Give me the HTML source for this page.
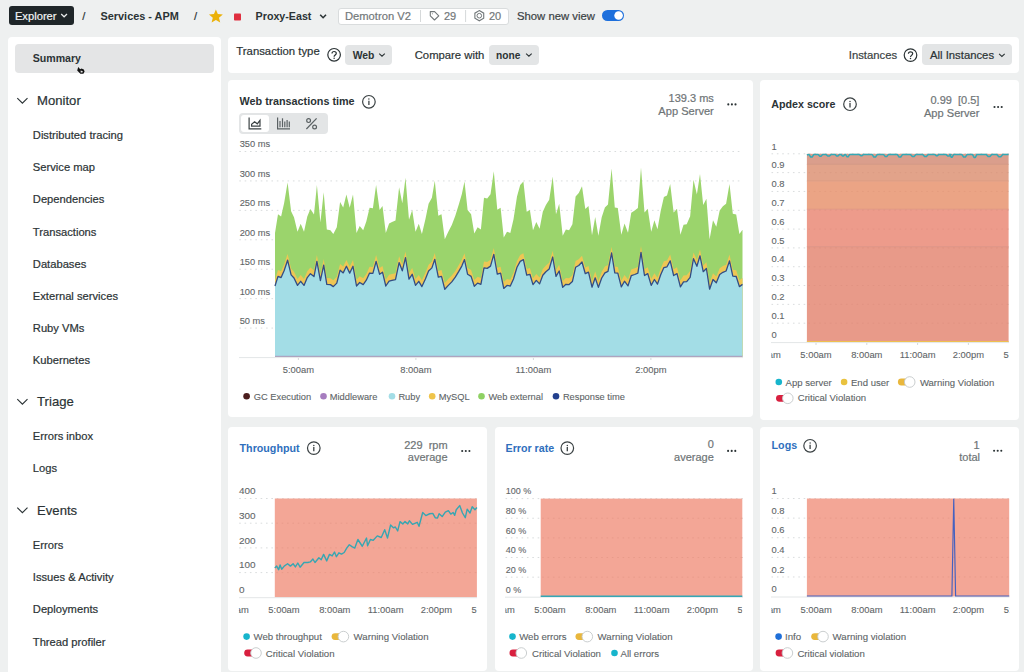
<!DOCTYPE html>
<html><head><meta charset="utf-8"><title>Proxy-East - Summary</title>
<style>
html,body{margin:0;padding:0;}
body{width:1024px;height:672px;overflow:hidden;position:relative;background:#eef0f0;font-family:"Liberation Sans", sans-serif;}
.t{position:absolute;white-space:nowrap;}
.b{position:absolute;}
svg{position:absolute;left:0;top:0;}
svg text{font-family:"Liberation Sans", sans-serif;}
</style></head><body>
<div class="b" style="left:8.5px;top:6.1px;width:65.2px;height:19.200000000000003px;background:#1f2629;border-radius:3px;"></div>
<div class="t" style="top:10.85px;font-size:11.2px;line-height:11.2px;color:#f2f3f3;-webkit-text-stroke:0.2px #f2f3f3;left:14.90px;">Explorer</div>
<div class="t" style="top:10.90px;font-size:11.2px;line-height:11.2px;color:#2b3335;-webkit-text-stroke:0.2px #2b3335;left:82.30px;">/</div>
<div class="t" style="top:11.02px;font-size:10.9px;line-height:10.9px;color:#2b3335;font-weight:700;left:100.50px;">Services - APM</div>
<div class="t" style="top:10.90px;font-size:11.2px;line-height:11.2px;color:#2b3335;-webkit-text-stroke:0.2px #2b3335;left:194.00px;">/</div>
<div class="t" style="top:11.00px;font-size:10.7px;line-height:10.7px;color:#2b3335;font-weight:700;left:255.60px;">Proxy-East</div>
<div class="b" style="left:337.5px;top:7.5px;width:171.7px;height:17.0px;background:#ffffff;border-radius:3px;border:1px solid #d9dcdd;box-sizing:border-box;"></div>
<div class="t" style="top:11.01px;font-size:11.2px;line-height:11.2px;color:#72787a;-webkit-text-stroke:0.2px #72787a;left:345.00px;">Demotron V2</div>
<div class="t" style="top:11.01px;font-size:11.0px;line-height:11.0px;color:#72787a;-webkit-text-stroke:0.2px #72787a;left:444.00px;">29</div>
<div class="t" style="top:11.01px;font-size:11.0px;line-height:11.0px;color:#72787a;-webkit-text-stroke:0.2px #72787a;left:489.00px;">20</div>
<div class="t" style="top:11.02px;font-size:11.3px;line-height:11.3px;color:#3a4244;-webkit-text-stroke:0.2px #3a4244;left:517.00px;">Show new view</div>
<div class="b" style="left:602.4px;top:10px;width:21.800000000000068px;height:11px;background:#1d6fdc;border-radius:6px;"></div>
<div class="b" style="left:8px;top:37px;width:213px;height:663px;background:#ffffff;border-radius:4px;"></div>
<div class="b" style="left:15px;top:44.3px;width:199px;height:28.299999999999997px;background:#e4e5e6;border-radius:4px;"></div>
<div class="t" style="top:53.41px;font-size:10.6px;line-height:10.6px;color:#2b3335;font-weight:700;left:32.70px;">Summary</div>
<div class="t" style="top:94.01px;font-size:13.1px;line-height:13.1px;color:#2b3335;-webkit-text-stroke:0.2px #2b3335;left:37.10px;">Monitor</div>
<div class="t" style="top:130.21px;font-size:11.2px;line-height:11.2px;color:#2b3335;-webkit-text-stroke:0.2px #2b3335;left:32.80px;">Distributed tracing</div>
<div class="t" style="top:162.31px;font-size:11.2px;line-height:11.2px;color:#2b3335;-webkit-text-stroke:0.2px #2b3335;left:32.80px;">Service map</div>
<div class="t" style="top:194.40px;font-size:11.2px;line-height:11.2px;color:#2b3335;-webkit-text-stroke:0.2px #2b3335;left:32.80px;">Dependencies</div>
<div class="t" style="top:226.51px;font-size:11.2px;line-height:11.2px;color:#2b3335;-webkit-text-stroke:0.2px #2b3335;left:32.80px;">Transactions</div>
<div class="t" style="top:258.60px;font-size:11.2px;line-height:11.2px;color:#2b3335;-webkit-text-stroke:0.2px #2b3335;left:32.80px;">Databases</div>
<div class="t" style="top:290.71px;font-size:11.2px;line-height:11.2px;color:#2b3335;-webkit-text-stroke:0.2px #2b3335;left:32.80px;">External services</div>
<div class="t" style="top:322.81px;font-size:11.2px;line-height:11.2px;color:#2b3335;-webkit-text-stroke:0.2px #2b3335;left:32.80px;">Ruby VMs</div>
<div class="t" style="top:354.90px;font-size:11.2px;line-height:11.2px;color:#2b3335;-webkit-text-stroke:0.2px #2b3335;left:32.80px;">Kubernetes</div>
<div class="t" style="top:395.01px;font-size:13.1px;line-height:13.1px;color:#2b3335;-webkit-text-stroke:0.2px #2b3335;left:37.10px;">Triage</div>
<div class="t" style="top:431.31px;font-size:11.2px;line-height:11.2px;color:#2b3335;-webkit-text-stroke:0.2px #2b3335;left:32.80px;">Errors inbox</div>
<div class="t" style="top:463.41px;font-size:11.2px;line-height:11.2px;color:#2b3335;-webkit-text-stroke:0.2px #2b3335;left:32.80px;">Logs</div>
<div class="t" style="top:503.51px;font-size:13.1px;line-height:13.1px;color:#2b3335;-webkit-text-stroke:0.2px #2b3335;left:37.10px;">Events</div>
<div class="t" style="top:540.21px;font-size:11.2px;line-height:11.2px;color:#2b3335;-webkit-text-stroke:0.2px #2b3335;left:32.80px;">Errors</div>
<div class="t" style="top:572.31px;font-size:11.2px;line-height:11.2px;color:#2b3335;-webkit-text-stroke:0.2px #2b3335;left:32.80px;">Issues &amp; Activity</div>
<div class="t" style="top:604.41px;font-size:11.2px;line-height:11.2px;color:#2b3335;-webkit-text-stroke:0.2px #2b3335;left:32.80px;">Deployments</div>
<div class="t" style="top:636.51px;font-size:11.2px;line-height:11.2px;color:#2b3335;-webkit-text-stroke:0.2px #2b3335;left:32.80px;">Thread profiler</div>
<div class="b" style="left:228.3px;top:37.1px;width:790.7px;height:35.699999999999996px;background:#ffffff;border-radius:4px;"></div>
<div class="t" style="top:45.51px;font-size:11.35px;line-height:11.35px;color:#2b3335;-webkit-text-stroke:0.2px #2b3335;left:236.30px;">Transaction type</div>
<div class="b" style="left:345.3px;top:44.6px;width:47.19999999999999px;height:20.800000000000004px;background:#e3e5e6;border-radius:4px;"></div>
<div class="t" style="top:50.70px;font-size:10.4px;line-height:10.4px;color:#2b3335;font-weight:700;left:352.70px;">Web</div>
<div class="t" style="top:50.10px;font-size:11.3px;line-height:11.3px;color:#2b3335;-webkit-text-stroke:0.2px #2b3335;left:414.70px;">Compare with</div>
<div class="b" style="left:488.9px;top:44.6px;width:49.700000000000045px;height:20.800000000000004px;background:#e3e5e6;border-radius:4px;"></div>
<div class="t" style="top:51.00px;font-size:10.2px;line-height:10.2px;color:#2b3335;font-weight:700;left:496.00px;">none</div>
<div class="t" style="top:50.22px;font-size:11.3px;line-height:11.3px;color:#3a4244;-webkit-text-stroke:0.2px #3a4244;left:848.80px;">Instances</div>
<div class="b" style="left:922.2px;top:44.4px;width:89.69999999999993px;height:21.1px;background:#e3e5e6;border-radius:4px;"></div>
<div class="t" style="top:50.22px;font-size:11.3px;line-height:11.3px;color:#2b3335;-webkit-text-stroke:0.2px #2b3335;left:930.00px;">All Instances</div>
<div class="b" style="left:228.3px;top:80.2px;width:524.7px;height:337.3px;background:#ffffff;border-radius:4px;"></div>
<div class="b" style="left:760.2px;top:80.2px;width:258.79999999999995px;height:339.8px;background:#ffffff;border-radius:4px;"></div>
<div class="b" style="left:228.4px;top:427.3px;width:258.6px;height:243.99999999999994px;background:#ffffff;border-radius:4px;"></div>
<div class="b" style="left:494.9px;top:427.3px;width:258.1px;height:243.99999999999994px;background:#ffffff;border-radius:4px;"></div>
<div class="b" style="left:760.2px;top:427.3px;width:258.79999999999995px;height:243.99999999999994px;background:#ffffff;border-radius:4px;"></div>
<div class="t" style="top:96.31px;font-size:10.8px;line-height:10.8px;color:#2b3335;font-weight:700;left:239.60px;">Web transactions time</div>
<div class="t" style="top:93.01px;font-size:11.0px;line-height:11.0px;color:#6e7476;-webkit-text-stroke:0.2px #6e7476;right:310.20px;text-align:right;">139.3 ms</div>
<div class="t" style="top:105.90px;font-size:11.1px;line-height:11.1px;color:#6e7476;-webkit-text-stroke:0.2px #6e7476;right:310.20px;text-align:right;">App Server</div>
<div class="b" style="left:239.1px;top:113.3px;width:88.70000000000002px;height:20.799999999999997px;background:#e3e5e6;border-radius:4px;"></div>
<div class="b" style="left:240.7px;top:114.9px;width:28.400000000000034px;height:17.400000000000006px;background:#ffffff;border-radius:3px;"></div>
<div class="t" style="top:140.40px;font-size:9.3px;line-height:9.3px;color:#5f6668;-webkit-text-stroke:0.1px #5f6668;left:239.70px;">350 ms</div>
<div class="t" style="top:169.83px;font-size:9.3px;line-height:9.3px;color:#5f6668;-webkit-text-stroke:0.1px #5f6668;left:239.70px;">300 ms</div>
<div class="t" style="top:199.26px;font-size:9.3px;line-height:9.3px;color:#5f6668;-webkit-text-stroke:0.1px #5f6668;left:239.70px;">250 ms</div>
<div class="t" style="top:228.71px;font-size:9.3px;line-height:9.3px;color:#5f6668;-webkit-text-stroke:0.1px #5f6668;left:239.70px;">200 ms</div>
<div class="t" style="top:258.12px;font-size:9.3px;line-height:9.3px;color:#5f6668;-webkit-text-stroke:0.1px #5f6668;left:239.70px;">150 ms</div>
<div class="t" style="top:287.57px;font-size:9.3px;line-height:9.3px;color:#5f6668;-webkit-text-stroke:0.1px #5f6668;left:239.70px;">100 ms</div>
<div class="t" style="top:316.99px;font-size:9.3px;line-height:9.3px;color:#5f6668;-webkit-text-stroke:0.1px #5f6668;left:239.70px;">50 ms</div>
<div class="t" style="top:365.01px;font-size:9.4px;line-height:9.4px;color:#5f6668;-webkit-text-stroke:0.1px #5f6668;left:198.40px;width:200px;text-align:center;">5:00am</div>
<div class="t" style="top:365.01px;font-size:9.4px;line-height:9.4px;color:#5f6668;-webkit-text-stroke:0.1px #5f6668;left:315.90px;width:200px;text-align:center;">8:00am</div>
<div class="t" style="top:365.01px;font-size:9.4px;line-height:9.4px;color:#5f6668;-webkit-text-stroke:0.1px #5f6668;left:433.40px;width:200px;text-align:center;">11:00am</div>
<div class="t" style="top:365.01px;font-size:9.4px;line-height:9.4px;color:#5f6668;-webkit-text-stroke:0.1px #5f6668;left:550.90px;width:200px;text-align:center;">2:00pm</div>
<div class="t" style="top:392.80px;font-size:9.3px;line-height:9.3px;color:#5d6466;-webkit-text-stroke:0.1px #5d6466;left:253.75px;">GC Execution</div>
<div class="t" style="top:392.80px;font-size:9.3px;line-height:9.3px;color:#5d6466;-webkit-text-stroke:0.1px #5d6466;left:329.80px;">Middleware</div>
<div class="t" style="top:392.80px;font-size:9.3px;line-height:9.3px;color:#5d6466;-webkit-text-stroke:0.1px #5d6466;left:398.40px;">Ruby</div>
<div class="t" style="top:392.80px;font-size:9.3px;line-height:9.3px;color:#5d6466;-webkit-text-stroke:0.1px #5d6466;left:438.70px;">MySQL</div>
<div class="t" style="top:392.80px;font-size:9.3px;line-height:9.3px;color:#5d6466;-webkit-text-stroke:0.1px #5d6466;left:488.40px;">Web external</div>
<div class="t" style="top:392.80px;font-size:9.3px;line-height:9.3px;color:#5d6466;-webkit-text-stroke:0.1px #5d6466;left:562.90px;">Response time</div>
<div class="t" style="top:99.00px;font-size:10.7px;line-height:10.7px;color:#2b3335;font-weight:700;left:771.30px;">Apdex score</div>
<div class="t" style="top:95.40px;font-size:11.0px;line-height:11.0px;color:#6e7476;-webkit-text-stroke:0.2px #6e7476;right:44.60px;text-align:right;">0.99&nbsp;&nbsp;[0.5]</div>
<div class="t" style="top:108.02px;font-size:11.1px;line-height:11.1px;color:#6e7476;-webkit-text-stroke:0.2px #6e7476;right:44.60px;text-align:right;">App Server</div>
<div class="t" style="top:141.51px;font-size:9.4px;line-height:9.4px;color:#5f6668;-webkit-text-stroke:0.1px #5f6668;left:771.50px;">1</div>
<div class="t" style="top:160.32px;font-size:9.4px;line-height:9.4px;color:#5f6668;-webkit-text-stroke:0.1px #5f6668;left:771.50px;">0.9</div>
<div class="t" style="top:179.15px;font-size:9.4px;line-height:9.4px;color:#5f6668;-webkit-text-stroke:0.1px #5f6668;left:771.50px;">0.8</div>
<div class="t" style="top:197.96px;font-size:9.4px;line-height:9.4px;color:#5f6668;-webkit-text-stroke:0.1px #5f6668;left:771.50px;">0.7</div>
<div class="t" style="top:216.79px;font-size:9.4px;line-height:9.4px;color:#5f6668;-webkit-text-stroke:0.1px #5f6668;left:771.50px;">0.6</div>
<div class="t" style="top:235.60px;font-size:9.4px;line-height:9.4px;color:#5f6668;-webkit-text-stroke:0.1px #5f6668;left:771.50px;">0.5</div>
<div class="t" style="top:254.43px;font-size:9.4px;line-height:9.4px;color:#5f6668;-webkit-text-stroke:0.1px #5f6668;left:771.50px;">0.4</div>
<div class="t" style="top:273.24px;font-size:9.4px;line-height:9.4px;color:#5f6668;-webkit-text-stroke:0.1px #5f6668;left:771.50px;">0.3</div>
<div class="t" style="top:292.07px;font-size:9.4px;line-height:9.4px;color:#5f6668;-webkit-text-stroke:0.1px #5f6668;left:771.50px;">0.2</div>
<div class="t" style="top:310.89px;font-size:9.4px;line-height:9.4px;color:#5f6668;-webkit-text-stroke:0.1px #5f6668;left:771.50px;">0.1</div>
<div class="t" style="top:329.71px;font-size:9.4px;line-height:9.4px;color:#5f6668;-webkit-text-stroke:0.1px #5f6668;left:771.50px;">0</div>
<div class="t" style="top:377.61px;font-size:9.55px;line-height:9.55px;color:#5d6466;-webkit-text-stroke:0.1px #5d6466;left:785.60px;">App server</div>
<div class="t" style="top:377.61px;font-size:9.55px;line-height:9.55px;color:#5d6466;-webkit-text-stroke:0.1px #5d6466;left:851.00px;">End user</div>
<div class="t" style="top:377.61px;font-size:9.55px;line-height:9.55px;color:#5d6466;-webkit-text-stroke:0.1px #5d6466;left:919.90px;">Warning Violation</div>
<div class="t" style="top:393.42px;font-size:9.55px;line-height:9.55px;color:#5d6466;-webkit-text-stroke:0.1px #5d6466;left:797.80px;">Critical Violation</div>
<div class="t" style="top:442.61px;font-size:10.7px;line-height:10.7px;color:#2f6fbd;font-weight:700;left:239.60px;">Throughput</div>
<div class="t" style="top:439.60px;font-size:11.0px;line-height:11.0px;color:#6e7476;-webkit-text-stroke:0.2px #6e7476;right:576.40px;text-align:right;">229&nbsp;&nbsp;rpm</div>
<div class="t" style="top:452.40px;font-size:11.0px;line-height:11.0px;color:#6e7476;-webkit-text-stroke:0.2px #6e7476;right:576.40px;text-align:right;">average</div>
<div class="t" style="top:486.12px;font-size:9.95px;line-height:9.95px;color:#5f6668;-webkit-text-stroke:0.1px #5f6668;left:239.00px;">400</div>
<div class="t" style="top:510.81px;font-size:9.95px;line-height:9.95px;color:#5f6668;-webkit-text-stroke:0.1px #5f6668;left:239.00px;">300</div>
<div class="t" style="top:535.51px;font-size:9.95px;line-height:9.95px;color:#5f6668;-webkit-text-stroke:0.1px #5f6668;left:239.00px;">200</div>
<div class="t" style="top:560.21px;font-size:9.95px;line-height:9.95px;color:#5f6668;-webkit-text-stroke:0.1px #5f6668;left:239.00px;">100</div>
<div class="t" style="top:584.90px;font-size:9.95px;line-height:9.95px;color:#5f6668;-webkit-text-stroke:0.1px #5f6668;left:239.00px;">0</div>
<div class="t" style="top:632.41px;font-size:9.65px;line-height:9.65px;color:#5d6466;-webkit-text-stroke:0.1px #5d6466;left:253.50px;">Web throughput</div>
<div class="t" style="top:632.41px;font-size:9.65px;line-height:9.65px;color:#5d6466;-webkit-text-stroke:0.1px #5d6466;left:353.60px;">Warning Violation</div>
<div class="t" style="top:648.91px;font-size:9.65px;line-height:9.65px;color:#5d6466;-webkit-text-stroke:0.1px #5d6466;left:265.70px;">Critical Violation</div>
<div class="t" style="top:442.80px;font-size:10.7px;line-height:10.7px;color:#2f6fbd;font-weight:700;left:505.50px;">Error rate</div>
<div class="t" style="top:439.40px;font-size:11.0px;line-height:11.0px;color:#6e7476;-webkit-text-stroke:0.2px #6e7476;right:310.20px;text-align:right;">0</div>
<div class="t" style="top:452.01px;font-size:11.0px;line-height:11.0px;color:#6e7476;-webkit-text-stroke:0.2px #6e7476;right:310.20px;text-align:right;">average</div>
<div class="t" style="top:487.31px;font-size:9.0px;line-height:9.0px;color:#5f6668;-webkit-text-stroke:0.1px #5f6668;left:505.70px;">100 %</div>
<div class="t" style="top:506.95px;font-size:9.0px;line-height:9.0px;color:#5f6668;-webkit-text-stroke:0.1px #5f6668;left:505.70px;">80 %</div>
<div class="t" style="top:526.59px;font-size:9.0px;line-height:9.0px;color:#5f6668;-webkit-text-stroke:0.1px #5f6668;left:505.70px;">60 %</div>
<div class="t" style="top:546.23px;font-size:9.0px;line-height:9.0px;color:#5f6668;-webkit-text-stroke:0.1px #5f6668;left:505.70px;">40 %</div>
<div class="t" style="top:565.87px;font-size:9.0px;line-height:9.0px;color:#5f6668;-webkit-text-stroke:0.1px #5f6668;left:505.70px;">20 %</div>
<div class="t" style="top:585.51px;font-size:9.0px;line-height:9.0px;color:#5f6668;-webkit-text-stroke:0.1px #5f6668;left:505.70px;">0 %</div>
<div class="t" style="top:632.41px;font-size:9.65px;line-height:9.65px;color:#5d6466;-webkit-text-stroke:0.1px #5d6466;left:519.20px;">Web errors</div>
<div class="t" style="top:632.41px;font-size:9.65px;line-height:9.65px;color:#5d6466;-webkit-text-stroke:0.1px #5d6466;left:597.60px;">Warning Violation</div>
<div class="t" style="top:648.91px;font-size:9.65px;line-height:9.65px;color:#5d6466;-webkit-text-stroke:0.1px #5d6466;left:532.00px;">Critical Violation</div>
<div class="t" style="top:648.91px;font-size:9.65px;line-height:9.65px;color:#5d6466;-webkit-text-stroke:0.1px #5d6466;left:620.50px;">All errors</div>
<div class="t" style="top:440.30px;font-size:10.7px;line-height:10.7px;color:#2f6fbd;font-weight:700;left:771.60px;">Logs</div>
<div class="t" style="top:439.60px;font-size:11.0px;line-height:11.0px;color:#6e7476;-webkit-text-stroke:0.2px #6e7476;right:44.50px;text-align:right;">1</div>
<div class="t" style="top:452.01px;font-size:11.0px;line-height:11.0px;color:#6e7476;-webkit-text-stroke:0.2px #6e7476;right:44.00px;text-align:right;">total</div>
<div class="t" style="top:486.21px;font-size:9.4px;line-height:9.4px;color:#5f6668;-webkit-text-stroke:0.1px #5f6668;left:771.50px;">1</div>
<div class="t" style="top:505.82px;font-size:9.4px;line-height:9.4px;color:#5f6668;-webkit-text-stroke:0.1px #5f6668;left:771.50px;">0.8</div>
<div class="t" style="top:525.45px;font-size:9.4px;line-height:9.4px;color:#5f6668;-webkit-text-stroke:0.1px #5f6668;left:771.50px;">0.6</div>
<div class="t" style="top:545.07px;font-size:9.4px;line-height:9.4px;color:#5f6668;-webkit-text-stroke:0.1px #5f6668;left:771.50px;">0.4</div>
<div class="t" style="top:564.68px;font-size:9.4px;line-height:9.4px;color:#5f6668;-webkit-text-stroke:0.1px #5f6668;left:771.50px;">0.2</div>
<div class="t" style="top:584.31px;font-size:9.4px;line-height:9.4px;color:#5f6668;-webkit-text-stroke:0.1px #5f6668;left:771.50px;">0</div>
<div class="t" style="top:632.41px;font-size:9.65px;line-height:9.65px;color:#5d6466;-webkit-text-stroke:0.1px #5d6466;left:785.00px;">Info</div>
<div class="t" style="top:632.41px;font-size:9.65px;line-height:9.65px;color:#5d6466;-webkit-text-stroke:0.1px #5d6466;left:832.60px;">Warning violation</div>
<div class="t" style="top:648.91px;font-size:9.65px;line-height:9.65px;color:#5d6466;-webkit-text-stroke:0.1px #5d6466;left:797.40px;">Critical violation</div>
<svg width="1024" height="672" viewBox="0 0 1024 672">
<line x1="239.3" y1="151.50" x2="743" y2="151.50" stroke="#d9dcdd" stroke-width="1.0" stroke-dasharray="1.6 3.76"/>
<line x1="239.3" y1="180.93" x2="743" y2="180.93" stroke="#d9dcdd" stroke-width="1.0" stroke-dasharray="1.6 3.76"/>
<line x1="239.3" y1="210.36" x2="743" y2="210.36" stroke="#d9dcdd" stroke-width="1.0" stroke-dasharray="1.6 3.76"/>
<line x1="239.3" y1="239.79" x2="743" y2="239.79" stroke="#d9dcdd" stroke-width="1.0" stroke-dasharray="1.6 3.76"/>
<line x1="239.3" y1="269.22" x2="743" y2="269.22" stroke="#d9dcdd" stroke-width="1.0" stroke-dasharray="1.6 3.76"/>
<line x1="239.3" y1="298.65" x2="743" y2="298.65" stroke="#d9dcdd" stroke-width="1.0" stroke-dasharray="1.6 3.76"/>
<line x1="239.3" y1="328.08" x2="743" y2="328.08" stroke="#d9dcdd" stroke-width="1.0" stroke-dasharray="1.6 3.76"/>
<line x1="771.5" y1="153.80" x2="1009" y2="153.80" stroke="#d9dcdd" stroke-width="1.0" stroke-dasharray="1.6 3.76"/>
<line x1="771.5" y1="172.62" x2="1009" y2="172.62" stroke="#d9dcdd" stroke-width="1.0" stroke-dasharray="1.6 3.76"/>
<line x1="771.5" y1="191.44" x2="1009" y2="191.44" stroke="#d9dcdd" stroke-width="1.0" stroke-dasharray="1.6 3.76"/>
<line x1="771.5" y1="210.26" x2="1009" y2="210.26" stroke="#d9dcdd" stroke-width="1.0" stroke-dasharray="1.6 3.76"/>
<line x1="771.5" y1="229.08" x2="1009" y2="229.08" stroke="#d9dcdd" stroke-width="1.0" stroke-dasharray="1.6 3.76"/>
<line x1="771.5" y1="247.90" x2="1009" y2="247.90" stroke="#d9dcdd" stroke-width="1.0" stroke-dasharray="1.6 3.76"/>
<line x1="771.5" y1="266.72" x2="1009" y2="266.72" stroke="#d9dcdd" stroke-width="1.0" stroke-dasharray="1.6 3.76"/>
<line x1="771.5" y1="285.54" x2="1009" y2="285.54" stroke="#d9dcdd" stroke-width="1.0" stroke-dasharray="1.6 3.76"/>
<line x1="771.5" y1="304.36" x2="1009" y2="304.36" stroke="#d9dcdd" stroke-width="1.0" stroke-dasharray="1.6 3.76"/>
<line x1="771.5" y1="323.18" x2="1009" y2="323.18" stroke="#d9dcdd" stroke-width="1.0" stroke-dasharray="1.6 3.76"/>
<line x1="239.2" y1="498.50" x2="477" y2="498.50" stroke="#d9dcdd" stroke-width="1.0" stroke-dasharray="1.6 3.76"/>
<line x1="239.2" y1="523.20" x2="477" y2="523.20" stroke="#d9dcdd" stroke-width="1.0" stroke-dasharray="1.6 3.76"/>
<line x1="239.2" y1="547.90" x2="477" y2="547.90" stroke="#d9dcdd" stroke-width="1.0" stroke-dasharray="1.6 3.76"/>
<line x1="239.2" y1="572.60" x2="477" y2="572.60" stroke="#d9dcdd" stroke-width="1.0" stroke-dasharray="1.6 3.76"/>
<line x1="505.5" y1="498.60" x2="743" y2="498.60" stroke="#d9dcdd" stroke-width="1.0" stroke-dasharray="1.6 3.76"/>
<line x1="505.5" y1="518.24" x2="743" y2="518.24" stroke="#d9dcdd" stroke-width="1.0" stroke-dasharray="1.6 3.76"/>
<line x1="505.5" y1="537.88" x2="743" y2="537.88" stroke="#d9dcdd" stroke-width="1.0" stroke-dasharray="1.6 3.76"/>
<line x1="505.5" y1="557.52" x2="743" y2="557.52" stroke="#d9dcdd" stroke-width="1.0" stroke-dasharray="1.6 3.76"/>
<line x1="505.5" y1="577.16" x2="743" y2="577.16" stroke="#d9dcdd" stroke-width="1.0" stroke-dasharray="1.6 3.76"/>
<line x1="771.5" y1="498.50" x2="1009.5" y2="498.50" stroke="#d9dcdd" stroke-width="1.0" stroke-dasharray="1.6 3.76"/>
<line x1="771.5" y1="518.12" x2="1009.5" y2="518.12" stroke="#d9dcdd" stroke-width="1.0" stroke-dasharray="1.6 3.76"/>
<line x1="771.5" y1="537.74" x2="1009.5" y2="537.74" stroke="#d9dcdd" stroke-width="1.0" stroke-dasharray="1.6 3.76"/>
<line x1="771.5" y1="557.36" x2="1009.5" y2="557.36" stroke="#d9dcdd" stroke-width="1.0" stroke-dasharray="1.6 3.76"/>
<line x1="771.5" y1="576.98" x2="1009.5" y2="576.98" stroke="#d9dcdd" stroke-width="1.0" stroke-dasharray="1.6 3.76"/>
<polyline points="61.2,14 64.1,16.8 67,14" fill="none" stroke="#eceeee" stroke-width="1.2"/>
<polygon points="215.90,9.40 217.81,14.07 222.84,14.44 218.99,17.70 220.19,22.61 215.90,19.95 211.61,22.61 212.81,17.70 208.96,14.44 213.99,14.07" fill="#ebb108"/>
<rect x="234" y="13.5" width="7" height="7" rx="0.8" fill="#df2f3f"/>
<polyline points="320.2,14.8 323.1,17.7 326,14.8" fill="none" stroke="#2b3335" stroke-width="1.6"/>
<line x1="420.5" y1="10" x2="420.5" y2="22" stroke="#d6d9da" stroke-width="1"/>
<line x1="465.6" y1="10" x2="465.6" y2="22" stroke="#d6d9da" stroke-width="1"/>
<path d="M430.3,11.6 L434.6,11.6 L438.8,15.8 L434.5,20 L430.3,15.8 Z" fill="none" stroke="#72787a" stroke-width="1.1" stroke-linejoin="round"/>
<circle cx="432.4" cy="13.7" r="0.5" fill="#72787a"/>
<polygon points="479.30,10.60 483.72,13.15 483.72,18.25 479.30,20.80 474.88,18.25 474.88,13.15" fill="none" stroke="#72787a" stroke-width="1.1"/>
<circle cx="479.3" cy="15.7" r="2.3" fill="none" stroke="#72787a" stroke-width="1"/>
<circle cx="618.6" cy="15.5" r="4.3" fill="#ffffff"/>
<path d="M78.2,67 L80.2,69.2 L81.5,68.6 L83.8,69.6 L84.6,71.6 L83.4,73.8 L80.4,73.8 L77.2,70.6 Z" fill="#111"/>
<path d="M80.6,70.6 L82.8,71.2 L82.4,72.6 L80.6,72.6 Z" fill="#e8e8e8"/>
<polyline points="17.3,98.2 22.4,103.2 27.5,98.2" fill="none" stroke="#2b3335" stroke-width="1.15"/>
<polyline points="17.3,399.2 22.4,404.2 27.5,399.2" fill="none" stroke="#2b3335" stroke-width="1.15"/>
<polyline points="17.3,507.7 22.4,512.6999999999999 27.5,507.7" fill="none" stroke="#2b3335" stroke-width="1.15"/>
<circle cx="334.1" cy="54.8" r="6.3" fill="none" stroke="#2b3335" stroke-width="1.2"/>
<path d="M332.0,53.4 C332.0,50.9 336.3,50.9 336.3,53.3 C336.3,55.0 334.1,55.099999999999994 334.1,56.699999999999996" fill="none" stroke="#2b3335" stroke-width="1.2"/>
<circle cx="334.1" cy="58.3" r="0.75" fill="#2b3335"/>
<polyline points="379.2,53.6 382.0,56.2 384.8,53.6" fill="none" stroke="#2b3335" stroke-width="1.1"/>
<polyline points="526.1,53.6 528.9,56.2 531.7,53.6" fill="none" stroke="#2b3335" stroke-width="1.1"/>
<circle cx="910.5" cy="55.1" r="6.3" fill="none" stroke="#2b3335" stroke-width="1.2"/>
<path d="M908.4,53.7 C908.4,51.2 912.7,51.2 912.7,53.6 C912.7,55.300000000000004 910.5,55.4 910.5,57.0" fill="none" stroke="#2b3335" stroke-width="1.2"/>
<circle cx="910.5" cy="58.6" r="0.75" fill="#2b3335"/>
<polyline points="999.1,53.8 1001.9,56.4 1004.7,53.8" fill="none" stroke="#2b3335" stroke-width="1.1"/>
<circle cx="368.9" cy="101.8" r="6.3" fill="none" stroke="#3b4244" stroke-width="1.2"/>
<line x1="368.9" y1="100.7" x2="368.9" y2="105.0" stroke="#3b4244" stroke-width="1.3"/>
<circle cx="368.9" cy="99.1" r="0.75" fill="#3b4244"/>
<circle cx="728.30" cy="104.4" r="1.05" fill="#2b3335"/>
<circle cx="731.90" cy="104.4" r="1.05" fill="#2b3335"/>
<circle cx="735.50" cy="104.4" r="1.05" fill="#2b3335"/>
<g fill="none" stroke="#3b4244" stroke-width="1.2"><polyline points="249.1,117.6 249.1,128.8 261.3,128.8"/><path d="M251.6,126.2 L251.6,124.3 L254.6,121.8 L257.3,123.8 L260,120.3 L260,126.2 Z"/></g>
<g fill="none" stroke="#5a6163" stroke-width="1.2"><polyline points="277.6,117.6 277.6,128.8 290,128.8"/><line x1="280" y1="121" x2="280" y2="127.2"/><line x1="282.5" y1="118.3" x2="282.5" y2="127.2"/><line x1="284.8" y1="121.6" x2="284.8" y2="127.2"/><line x1="287.1" y1="120" x2="287.1" y2="127.2"/><line x1="289.3" y1="121.6" x2="289.3" y2="127.2"/></g>
<g fill="none" stroke="#5a6163" stroke-width="1.2"><line x1="306.4" y1="129" x2="316.6" y2="118.3"/><circle cx="308.6" cy="120.6" r="1.9"/><circle cx="314.6" cy="127" r="1.9"/></g>
<polygon points="275.0,356.6 275.00,232.93 278.00,214.21 281.10,216.55 284.10,203.29 287.60,182.62 291.10,211.28 294.00,217.33 297.50,231.76 300.70,223.77 304.00,231.76 307.30,216.55 310.40,208.94 314.00,214.60 316.90,184.96 320.40,222.59 323.70,192.37 326.80,229.62 330.40,230.20 333.30,234.10 336.80,227.28 340.10,202.12 343.20,207.38 346.40,194.52 349.70,207.78 353.00,194.52 356.50,232.93 359.70,226.10 363.20,230.20 366.30,221.62 369.60,207.78 372.90,208.36 376.10,184.96 379.60,210.12 382.50,206.02 385.80,232.93 389.10,223.38 392.00,222.01 395.50,220.45 399.10,187.30 402.30,203.29 405.50,177.74 409.00,219.67 412.20,210.12 415.50,231.76 418.80,223.77 421.90,234.10 425.40,219.28 428.60,203.68 431.90,197.63 434.80,180.87 438.30,215.77 441.50,214.21 444.80,239.37 448.30,231.76 451.80,224.93 455.30,215.77 458.80,204.46 461.80,194.13 464.50,181.45 467.60,210.12 471.10,214.21 474.30,233.52 477.60,227.28 480.90,229.62 484.00,197.63 487.20,198.61 490.50,194.13 493.80,171.31 497.30,209.73 500.60,207.78 503.75,237.61 507.00,231.76 510.30,232.93 513.50,219.28 517.00,196.47 520.20,184.96 523.40,181.45 526.70,211.87 529.90,210.12 533.00,230.20 536.30,222.01 539.60,228.83 542.80,211.87 545.90,205.04 549.20,199.78 552.70,176.38 556.00,214.21 559.20,203.68 562.70,235.66 565.90,229.62 569.10,230.20 572.40,224.35 575.60,196.47 578.75,192.95 582.00,186.13 585.30,208.94 588.50,206.02 592.00,235.27 595.20,216.94 598.40,235.66 601.70,217.33 604.90,207.38 608.00,204.46 611.60,168.58 614.80,207.38 617.80,207.97 621.30,234.68 624.50,223.57 628.00,232.73 631.25,212.84 634.70,210.50 637.90,207.97 641.00,167.41 644.50,212.45 647.75,208.75 651.20,231.76 654.40,220.25 657.50,229.23 660.70,211.09 663.90,197.05 667.00,195.49 670.20,183.98 673.65,212.45 677.00,208.75 680.40,234.68 683.55,224.74 686.70,224.35 690.15,216.16 693.50,179.69 696.90,194.52 700.00,174.04 703.20,205.04 706.40,198.80 709.60,239.17 713.00,220.25 716.30,226.69 719.70,210.50 722.90,206.22 726.10,203.68 729.50,183.98 732.80,213.63 736.20,214.40 739.40,234.10 742.50,229.81 742.5,356.6" fill="#9bd46c"/>
<polygon points="275.0,356.6 275.00,279.70 278.00,270.10 281.10,271.30 284.10,264.50 287.60,253.90 291.10,268.60 294.00,271.70 297.50,279.10 300.70,275.00 304.00,279.10 307.30,271.30 310.40,267.40 314.00,270.30 316.90,255.10 320.40,274.40 323.70,258.90 326.80,278.00 330.40,278.30 333.30,280.30 336.80,276.80 340.10,263.90 343.20,266.60 346.40,260.00 349.70,266.80 353.00,260.00 356.50,279.70 359.70,276.20 363.20,278.30 366.30,273.90 369.60,266.80 372.90,267.10 376.10,255.10 379.60,268.00 382.50,265.90 385.80,279.70 389.10,274.80 392.00,274.10 395.50,273.30 399.10,256.30 402.30,264.50 405.50,251.40 409.00,272.90 412.20,268.00 415.50,279.10 418.80,275.00 421.90,280.30 425.40,272.70 428.60,264.70 431.90,261.60 434.80,253.00 438.30,270.90 441.50,270.10 444.80,283.00 448.30,279.10 451.80,275.60 455.30,270.90 458.80,265.10 461.80,259.80 464.50,253.30 467.60,268.00 471.10,270.10 474.30,280.00 477.60,276.80 480.90,278.00 484.00,261.60 487.20,262.10 490.50,259.80 493.80,248.10 497.30,267.80 500.60,266.80 503.75,282.10 507.00,279.10 510.30,279.70 513.50,272.70 517.00,261.00 520.20,255.10 523.40,253.30 526.70,268.90 529.90,268.00 533.00,278.30 536.30,274.10 539.60,277.60 542.80,268.90 545.90,265.40 549.20,262.70 552.70,250.70 556.00,270.10 559.20,264.70 562.70,281.10 565.90,278.00 569.10,278.30 572.40,275.30 575.60,261.00 578.75,259.20 582.00,255.70 585.30,267.40 588.50,265.90 592.00,280.90 595.20,271.50 598.40,281.10 601.70,271.70 604.90,266.60 608.00,265.10 611.60,246.70 614.80,266.60 617.80,266.90 621.30,280.60 624.50,274.90 628.00,279.60 631.25,269.40 634.70,268.20 637.90,266.90 641.00,246.10 644.50,269.20 647.75,267.30 651.20,279.10 654.40,273.20 657.50,277.80 660.70,268.50 663.90,261.30 667.00,260.50 670.20,254.60 673.65,269.20 677.00,267.30 680.40,280.60 683.55,275.50 686.70,275.30 690.15,271.10 693.50,252.40 696.90,260.00 700.00,249.50 703.20,265.40 706.40,262.20 709.60,282.90 713.00,273.20 716.30,276.50 719.70,268.20 722.90,266.00 726.10,264.70 729.50,254.60 732.80,269.80 736.20,270.20 739.40,280.30 742.50,278.10 742.5,356.6" fill="#eec654"/>
<polygon points="275.0,356.6 275.00,286.00 278.00,276.40 281.10,277.60 284.10,270.80 287.60,260.20 291.10,274.90 294.00,278.00 297.50,285.40 300.70,281.30 304.00,285.40 307.30,277.60 310.40,273.70 314.00,276.60 316.90,261.40 320.40,280.70 323.70,265.20 326.80,284.30 330.40,284.60 333.30,286.60 336.80,283.10 340.10,270.20 343.20,272.90 346.40,266.30 349.70,273.10 353.00,266.30 356.50,286.00 359.70,282.50 363.20,284.60 366.30,280.20 369.60,273.10 372.90,273.40 376.10,261.40 379.60,274.30 382.50,272.20 385.80,286.00 389.10,281.10 392.00,280.40 395.50,279.60 399.10,262.60 402.30,270.80 405.50,257.70 409.00,279.20 412.20,274.30 415.50,285.40 418.80,281.30 421.90,286.60 425.40,279.00 428.60,271.00 431.90,267.90 434.80,259.30 438.30,277.20 441.50,276.40 444.80,289.30 448.30,285.40 451.80,281.90 455.30,277.20 458.80,271.40 461.80,266.10 464.50,259.60 467.60,274.30 471.10,276.40 474.30,286.30 477.60,283.10 480.90,284.30 484.00,267.90 487.20,268.40 490.50,266.10 493.80,254.40 497.30,274.10 500.60,273.10 503.75,288.40 507.00,285.40 510.30,286.00 513.50,279.00 517.00,267.30 520.20,261.40 523.40,259.60 526.70,275.20 529.90,274.30 533.00,284.60 536.30,280.40 539.60,283.90 542.80,275.20 545.90,271.70 549.20,269.00 552.70,257.00 556.00,276.40 559.20,271.00 562.70,287.40 565.90,284.30 569.10,284.60 572.40,281.60 575.60,267.30 578.75,265.50 582.00,262.00 585.30,273.70 588.50,272.20 592.00,287.20 595.20,277.80 598.40,287.40 601.70,278.00 604.90,272.90 608.00,271.40 611.60,253.00 614.80,272.90 617.80,273.20 621.30,286.90 624.50,281.20 628.00,285.90 631.25,275.70 634.70,274.50 637.90,273.20 641.00,252.40 644.50,275.50 647.75,273.60 651.20,285.40 654.40,279.50 657.50,284.10 660.70,274.80 663.90,267.60 667.00,266.80 670.20,260.90 673.65,275.50 677.00,273.60 680.40,286.90 683.55,281.80 686.70,281.60 690.15,277.40 693.50,258.70 696.90,266.30 700.00,255.80 703.20,271.70 706.40,268.50 709.60,289.20 713.00,279.50 716.30,282.80 719.70,274.50 722.90,272.30 726.10,271.00 729.50,260.90 732.80,276.10 736.20,276.50 739.40,286.60 742.50,284.40 742.5,356.6" fill="#a3dde6"/>
<polyline points="275.00,286.00 278.00,276.40 281.10,277.60 284.10,270.80 287.60,260.20 291.10,274.90 294.00,278.00 297.50,285.40 300.70,281.30 304.00,285.40 307.30,277.60 310.40,273.70 314.00,276.60 316.90,261.40 320.40,280.70 323.70,265.20 326.80,284.30 330.40,284.60 333.30,286.60 336.80,283.10 340.10,270.20 343.20,272.90 346.40,266.30 349.70,273.10 353.00,266.30 356.50,286.00 359.70,282.50 363.20,284.60 366.30,280.20 369.60,273.10 372.90,273.40 376.10,261.40 379.60,274.30 382.50,272.20 385.80,286.00 389.10,281.10 392.00,280.40 395.50,279.60 399.10,262.60 402.30,270.80 405.50,257.70 409.00,279.20 412.20,274.30 415.50,285.40 418.80,281.30 421.90,286.60 425.40,279.00 428.60,271.00 431.90,267.90 434.80,259.30 438.30,277.20 441.50,276.40 444.80,289.30 448.30,285.40 451.80,281.90 455.30,277.20 458.80,271.40 461.80,266.10 464.50,259.60 467.60,274.30 471.10,276.40 474.30,286.30 477.60,283.10 480.90,284.30 484.00,267.90 487.20,268.40 490.50,266.10 493.80,254.40 497.30,274.10 500.60,273.10 503.75,288.40 507.00,285.40 510.30,286.00 513.50,279.00 517.00,267.30 520.20,261.40 523.40,259.60 526.70,275.20 529.90,274.30 533.00,284.60 536.30,280.40 539.60,283.90 542.80,275.20 545.90,271.70 549.20,269.00 552.70,257.00 556.00,276.40 559.20,271.00 562.70,287.40 565.90,284.30 569.10,284.60 572.40,281.60 575.60,267.30 578.75,265.50 582.00,262.00 585.30,273.70 588.50,272.20 592.00,287.20 595.20,277.80 598.40,287.40 601.70,278.00 604.90,272.90 608.00,271.40 611.60,253.00 614.80,272.90 617.80,273.20 621.30,286.90 624.50,281.20 628.00,285.90 631.25,275.70 634.70,274.50 637.90,273.20 641.00,252.40 644.50,275.50 647.75,273.60 651.20,285.40 654.40,279.50 657.50,284.10 660.70,274.80 663.90,267.60 667.00,266.80 670.20,260.90 673.65,275.50 677.00,273.60 680.40,286.90 683.55,281.80 686.70,281.60 690.15,277.40 693.50,258.70 696.90,266.30 700.00,255.80 703.20,271.70 706.40,268.50 709.60,289.20 713.00,279.50 716.30,282.80 719.70,274.50 722.90,272.30 726.10,271.00 729.50,260.90 732.80,276.10 736.20,276.50 739.40,286.60 742.50,284.40" fill="none" stroke="#324d84" stroke-width="1.3" stroke-linejoin="round"/>
<line x1="275.0" y1="356.3" x2="742.5" y2="356.3" stroke="#a88fc4" stroke-width="0.9"/>
<line x1="239" y1="357.6" x2="743" y2="357.6" stroke="#e3e6e7" stroke-width="1"/>
<line x1="298.4" y1="358" x2="298.4" y2="360" stroke="#d5d9da" stroke-width="1"/>
<line x1="415.9" y1="358" x2="415.9" y2="360" stroke="#d5d9da" stroke-width="1"/>
<line x1="533.4" y1="358" x2="533.4" y2="360" stroke="#d5d9da" stroke-width="1"/>
<line x1="650.9" y1="358" x2="650.9" y2="360" stroke="#d5d9da" stroke-width="1"/>
<circle cx="246.6" cy="396.3" r="3.3" fill="#4b1e1e"/>
<circle cx="323.5" cy="396.3" r="3.3" fill="#a67dbf"/>
<circle cx="392" cy="396.3" r="3.3" fill="#a3dde6"/>
<circle cx="432.2" cy="396.3" r="3.3" fill="#efc44a"/>
<circle cx="481.5" cy="396.3" r="3.3" fill="#8fd163"/>
<circle cx="556" cy="396.3" r="3.3" fill="#23408e"/>
<circle cx="850.0" cy="104.2" r="6.3" fill="none" stroke="#3b4244" stroke-width="1.2"/>
<line x1="850.0" y1="103.10000000000001" x2="850.0" y2="107.4" stroke="#3b4244" stroke-width="1.3"/>
<circle cx="850.0" cy="101.5" r="0.75" fill="#3b4244"/>
<circle cx="994.50" cy="107.0" r="1.05" fill="#2b3335"/>
<circle cx="998.10" cy="107.0" r="1.05" fill="#2b3335"/>
<circle cx="1001.70" cy="107.0" r="1.05" fill="#2b3335"/>
<rect x="806.9" y="153.8" width="201.70000000000005" height="10.599999999999994" fill="#da9e8c"/>
<rect x="806.9" y="164.4" width="201.70000000000005" height="16.69999999999999" fill="#e2a38a"/>
<rect x="806.9" y="181.1" width="201.70000000000005" height="28.200000000000017" fill="#eba485"/>
<rect x="806.9" y="209.3" width="201.70000000000005" height="37.39999999999998" fill="#ed9b8b"/>
<rect x="806.9" y="246.7" width="201.70000000000005" height="95.30000000000001" fill="#e89a89"/>
<line x1="806.9" y1="246.7" x2="1008.6" y2="246.7" stroke="#dc8e80" stroke-width="0.9"/>
<line x1="806.9" y1="164.4" x2="1008.6" y2="164.4" stroke="#d39580" stroke-width="0.9"/>
<line x1="806.9" y1="181.1" x2="1008.6" y2="181.1" stroke="#dc9a80" stroke-width="0.9"/>
<line x1="806.9" y1="209.3" x2="1008.6" y2="209.3" stroke="#e0937f" stroke-width="0.9"/>
<line x1="808.4" y1="172.62" x2="1008.6" y2="172.62" stroke="rgba(140,70,50,0.07)" stroke-width="1" stroke-dasharray="1.6 3.76"/>
<line x1="808.4" y1="191.44" x2="1008.6" y2="191.44" stroke="rgba(140,70,50,0.07)" stroke-width="1" stroke-dasharray="1.6 3.76"/>
<line x1="808.4" y1="210.26" x2="1008.6" y2="210.26" stroke="rgba(140,70,50,0.07)" stroke-width="1" stroke-dasharray="1.6 3.76"/>
<line x1="808.4" y1="229.08" x2="1008.6" y2="229.08" stroke="rgba(140,70,50,0.07)" stroke-width="1" stroke-dasharray="1.6 3.76"/>
<line x1="808.4" y1="247.90" x2="1008.6" y2="247.90" stroke="rgba(140,70,50,0.07)" stroke-width="1" stroke-dasharray="1.6 3.76"/>
<line x1="808.4" y1="266.72" x2="1008.6" y2="266.72" stroke="rgba(140,70,50,0.07)" stroke-width="1" stroke-dasharray="1.6 3.76"/>
<line x1="808.4" y1="285.54" x2="1008.6" y2="285.54" stroke="rgba(140,70,50,0.07)" stroke-width="1" stroke-dasharray="1.6 3.76"/>
<line x1="808.4" y1="304.36" x2="1008.6" y2="304.36" stroke="rgba(140,70,50,0.07)" stroke-width="1" stroke-dasharray="1.6 3.76"/>
<line x1="808.4" y1="323.18" x2="1008.6" y2="323.18" stroke="rgba(140,70,50,0.07)" stroke-width="1" stroke-dasharray="1.6 3.76"/>
<polyline points="806.90,155.00 808.90,154.40 810.65,157.00 812.15,157.00 813.90,154.40 818.20,154.40 819.80,156.20 821.00,156.20 822.60,154.40 825.85,154.40 827.73,156.00 829.48,156.00 831.35,154.40 835.00,154.40 836.65,156.00 837.95,156.00 839.60,154.40 840.90,154.40 842.45,155.90 843.55,155.90 845.10,154.40 845.50,154.40 847.05,156.80 848.15,156.80 849.70,154.40 859.20,154.40 860.80,155.80 862.00,155.80 863.60,154.40 872.00,154.40 873.85,157.00 875.55,157.00 877.40,154.40 883.50,154.40 885.25,156.60 886.75,156.60 888.50,154.40 897.20,154.40 899.05,157.00 900.75,157.00 902.60,154.40 910.45,154.40 912.33,156.60 914.08,156.60 915.95,154.40 922.75,154.40 924.62,156.60 926.38,156.60 928.25,154.40 934.70,154.40 936.25,155.80 937.35,155.80 938.90,154.40 945.90,154.40 947.70,156.00 949.30,156.00 951.10,154.40 949.70,154.40 951.20,157.20 952.20,157.20 953.70,154.40 961.75,154.40 963.62,157.00 965.38,157.00 967.25,154.40 972.40,154.40 974.05,157.40 975.35,157.40 977.00,154.40 986.20,154.40 988.10,156.60 989.90,156.60 991.80,154.40 996.80,154.40 998.80,156.80 1000.80,156.80 1002.80,154.40 1008.60,154.40" fill="none" stroke="#33a9b6" stroke-width="1.5" stroke-linejoin="round"/>
<line x1="806.9" y1="341.5" x2="1008.6" y2="341.5" stroke="#efc44a" stroke-width="0.9"/>
<line x1="771" y1="342.6" x2="1009" y2="342.6" stroke="#e3e6e7" stroke-width="1"/>
<defs><clipPath id="c771_357"><rect x="771.3" y="345.7" width="237.70000000000005" height="16"/></clipPath></defs>
<text x="765.20" y="357.7" text-anchor="middle" clip-path="url(#c771_357)" font-size="9.4" fill="#5f6668" stroke="#5f6668" stroke-width="0.1">2:00am</text>
<text x="816.00" y="357.7" text-anchor="middle" clip-path="url(#c771_357)" font-size="9.4" fill="#5f6668" stroke="#5f6668" stroke-width="0.1">5:00am</text>
<line x1="816.00" y1="343" x2="816.00" y2="345" stroke="#d5d9da" stroke-width="1"/>
<text x="866.80" y="357.7" text-anchor="middle" clip-path="url(#c771_357)" font-size="9.4" fill="#5f6668" stroke="#5f6668" stroke-width="0.1">8:00am</text>
<line x1="866.80" y1="343" x2="866.80" y2="345" stroke="#d5d9da" stroke-width="1"/>
<text x="917.60" y="357.7" text-anchor="middle" clip-path="url(#c771_357)" font-size="9.4" fill="#5f6668" stroke="#5f6668" stroke-width="0.1">11:00am</text>
<line x1="917.60" y1="343" x2="917.60" y2="345" stroke="#d5d9da" stroke-width="1"/>
<text x="968.40" y="357.7" text-anchor="middle" clip-path="url(#c771_357)" font-size="9.4" fill="#5f6668" stroke="#5f6668" stroke-width="0.1">2:00pm</text>
<line x1="968.40" y1="343" x2="968.40" y2="345" stroke="#d5d9da" stroke-width="1"/>
<text x="1019.20" y="357.7" text-anchor="middle" clip-path="url(#c771_357)" font-size="9.4" fill="#5f6668" stroke="#5f6668" stroke-width="0.1">5:00pm</text>
<circle cx="778.8" cy="382.0" r="3.3" fill="#17b5cc"/>
<circle cx="844.1" cy="382.0" r="3.3" fill="#e9c23f"/>
<path d="M901.3,378.6 L909.9,378.6 L909.9,385.4 L901.3,385.4 A3.4,3.4 0 0 1 901.3,378.6 Z" fill="#e9b73c"/>
<circle cx="909.6999999999999" cy="382.0" r="5.3" fill="#ffffff" stroke="#c4c8ca" stroke-width="0.9"/>
<path d="M779.4,394.90000000000003 L788.0,394.90000000000003 L788.0,401.7 L779.4,401.7 A3.4,3.4 0 0 1 779.4,394.90000000000003 Z" fill="#d8203f"/>
<circle cx="787.8" cy="398.3" r="5.3" fill="#ffffff" stroke="#c4c8ca" stroke-width="0.9"/>
<circle cx="313.8" cy="448.1" r="6.3" fill="none" stroke="#3b4244" stroke-width="1.2"/>
<line x1="313.8" y1="447.0" x2="313.8" y2="451.3" stroke="#3b4244" stroke-width="1.3"/>
<circle cx="313.8" cy="445.40000000000003" r="0.75" fill="#3b4244"/>
<circle cx="462.20" cy="451.0" r="1.05" fill="#2b3335"/>
<circle cx="465.80" cy="451.0" r="1.05" fill="#2b3335"/>
<circle cx="469.40" cy="451.0" r="1.05" fill="#2b3335"/>
<rect x="274.8" y="498.5" width="202.09999999999997" height="98.79999999999995" fill="#f3a696"/>
<line x1="276.3" y1="523.20" x2="476.9" y2="523.20" stroke="#e89b8b" stroke-width="1" stroke-dasharray="1.6 3.76"/>
<line x1="276.3" y1="547.90" x2="476.9" y2="547.90" stroke="#e89b8b" stroke-width="1" stroke-dasharray="1.6 3.76"/>
<line x1="276.3" y1="572.60" x2="476.9" y2="572.60" stroke="#e89b8b" stroke-width="1" stroke-dasharray="1.6 3.76"/>
<line x1="239" y1="597.6999999999999" x2="477" y2="597.6999999999999" stroke="#e3e6e7" stroke-width="1"/>
<polyline points="274.80,568.10 276.70,566.10 278.60,569.70 280.10,565.00 281.70,569.20 284.20,566.10 287.60,563.75 290.40,566.10 293.10,563.75 295.40,566.90 297.80,563.00 300.10,567.20 304.00,562.50 307.90,562.50 310.30,561.90 312.90,559.10 315.00,562.50 318.90,557.80 321.20,559.80 323.60,554.40 326.70,560.90 329.50,554.40 332.20,555.90 334.50,552.00 336.40,556.70 338.90,552.80 341.50,554.10 344.20,552.50 346.70,548.10 349.30,544.70 352.00,546.60 354.80,548.10 357.90,539.50 362.30,546.25 366.50,538.00 367.60,545.80 370.40,539.50 373.25,540.30 377.30,535.90 381.25,537.50 384.70,529.70 387.50,538.00 390.60,525.00 393.40,527.80 395.30,527.00 397.70,530.90 400.00,521.60 402.80,523.90 405.00,521.60 407.80,523.90 409.40,520.80 412.50,524.40 417.20,522.30 419.00,526.25 422.70,512.50 425.80,515.60 429.70,513.75 432.80,513.40 435.20,517.70 437.50,518.10 439.10,513.75 442.20,516.60 445.30,512.20 448.40,510.60 450.80,514.10 453.10,512.50 454.70,515.30 456.25,509.80 459.70,505.60 462.50,513.00 465.30,517.70 467.20,509.10 470.00,513.00 472.20,506.70 475.00,509.80 476.90,507.50" fill="none" stroke="#37a6b2" stroke-width="1.4" stroke-linejoin="round"/>
<defs><clipPath id="c238_612"><rect x="238.9" y="600.8" width="237.99999999999997" height="16"/></clipPath></defs>
<text x="233.20" y="612.8" text-anchor="middle" clip-path="url(#c238_612)" font-size="9.4" fill="#5f6668" stroke="#5f6668" stroke-width="0.1">2:00am</text>
<text x="284.00" y="612.8" text-anchor="middle" clip-path="url(#c238_612)" font-size="9.4" fill="#5f6668" stroke="#5f6668" stroke-width="0.1">5:00am</text>
<text x="334.80" y="612.8" text-anchor="middle" clip-path="url(#c238_612)" font-size="9.4" fill="#5f6668" stroke="#5f6668" stroke-width="0.1">8:00am</text>
<text x="385.60" y="612.8" text-anchor="middle" clip-path="url(#c238_612)" font-size="9.4" fill="#5f6668" stroke="#5f6668" stroke-width="0.1">11:00am</text>
<text x="436.40" y="612.8" text-anchor="middle" clip-path="url(#c238_612)" font-size="9.4" fill="#5f6668" stroke="#5f6668" stroke-width="0.1">2:00pm</text>
<text x="487.20" y="612.8" text-anchor="middle" clip-path="url(#c238_612)" font-size="9.4" fill="#5f6668" stroke="#5f6668" stroke-width="0.1">5:00pm</text>
<circle cx="246.6" cy="636.6" r="3.3" fill="#17b5cc"/>
<path d="M335.0,633.2 L343.6,633.2 L343.6,640.0 L335.0,640.0 A3.4,3.4 0 0 1 335.0,633.2 Z" fill="#e9b73c"/>
<circle cx="343.40000000000003" cy="636.6" r="5.3" fill="#ffffff" stroke="#c4c8ca" stroke-width="0.9"/>
<path d="M247.6,649.6 L256.2,649.6 L256.2,656.4 L247.6,656.4 A3.4,3.4 0 0 1 247.6,649.6 Z" fill="#d8203f"/>
<circle cx="256.0" cy="653.0" r="5.3" fill="#ffffff" stroke="#c4c8ca" stroke-width="0.9"/>
<circle cx="567.3" cy="448.1" r="6.3" fill="none" stroke="#3b4244" stroke-width="1.2"/>
<line x1="567.3" y1="447.0" x2="567.3" y2="451.3" stroke="#3b4244" stroke-width="1.3"/>
<circle cx="567.3" cy="445.40000000000003" r="0.75" fill="#3b4244"/>
<circle cx="728.10" cy="450.9" r="1.05" fill="#2b3335"/>
<circle cx="731.70" cy="450.9" r="1.05" fill="#2b3335"/>
<circle cx="735.30" cy="450.9" r="1.05" fill="#2b3335"/>
<rect x="540.7" y="498.6" width="201.5999999999999" height="98.19999999999993" fill="#f3a696"/>
<line x1="542.2" y1="518.24" x2="742.3" y2="518.24" stroke="#e89b8b" stroke-width="1" stroke-dasharray="1.6 3.76"/>
<line x1="542.2" y1="537.88" x2="742.3" y2="537.88" stroke="#e89b8b" stroke-width="1" stroke-dasharray="1.6 3.76"/>
<line x1="542.2" y1="557.52" x2="742.3" y2="557.52" stroke="#e89b8b" stroke-width="1" stroke-dasharray="1.6 3.76"/>
<line x1="542.2" y1="577.16" x2="742.3" y2="577.16" stroke="#e89b8b" stroke-width="1" stroke-dasharray="1.6 3.76"/>
<line x1="505" y1="597.1999999999999" x2="743" y2="597.1999999999999" stroke="#e3e6e7" stroke-width="1"/>
<line x1="540.7" y1="596.1999999999999" x2="742.3" y2="596.1999999999999" stroke="#35a7b5" stroke-width="1.4"/>
<defs><clipPath id="c505_612"><rect x="505.3" y="600.8" width="236.99999999999994" height="16"/></clipPath></defs>
<text x="499.20" y="612.8" text-anchor="middle" clip-path="url(#c505_612)" font-size="9.4" fill="#5f6668" stroke="#5f6668" stroke-width="0.1">2:00am</text>
<text x="550.00" y="612.8" text-anchor="middle" clip-path="url(#c505_612)" font-size="9.4" fill="#5f6668" stroke="#5f6668" stroke-width="0.1">5:00am</text>
<text x="600.80" y="612.8" text-anchor="middle" clip-path="url(#c505_612)" font-size="9.4" fill="#5f6668" stroke="#5f6668" stroke-width="0.1">8:00am</text>
<text x="651.60" y="612.8" text-anchor="middle" clip-path="url(#c505_612)" font-size="9.4" fill="#5f6668" stroke="#5f6668" stroke-width="0.1">11:00am</text>
<text x="702.40" y="612.8" text-anchor="middle" clip-path="url(#c505_612)" font-size="9.4" fill="#5f6668" stroke="#5f6668" stroke-width="0.1">2:00pm</text>
<text x="753.20" y="612.8" text-anchor="middle" clip-path="url(#c505_612)" font-size="9.4" fill="#5f6668" stroke="#5f6668" stroke-width="0.1">5:00pm</text>
<circle cx="512.5" cy="636.6" r="3.3" fill="#17b5cc"/>
<path d="M578.9,633.2 L587.5,633.2 L587.5,640.0 L578.9,640.0 A3.4,3.4 0 0 1 578.9,633.2 Z" fill="#e9b73c"/>
<circle cx="587.3" cy="636.6" r="5.3" fill="#ffffff" stroke="#c4c8ca" stroke-width="0.9"/>
<path d="M512.9,649.6 L521.5,649.6 L521.5,656.4 L512.9,656.4 A3.4,3.4 0 0 1 512.9,649.6 Z" fill="#d8203f"/>
<circle cx="521.3" cy="653.0" r="5.3" fill="#ffffff" stroke="#c4c8ca" stroke-width="0.9"/>
<circle cx="614.5" cy="653.0" r="3.3" fill="#17b5cc"/>
<circle cx="810.1" cy="445.8" r="6.3" fill="none" stroke="#3b4244" stroke-width="1.2"/>
<line x1="810.1" y1="444.7" x2="810.1" y2="449.0" stroke="#3b4244" stroke-width="1.3"/>
<circle cx="810.1" cy="443.1" r="0.75" fill="#3b4244"/>
<circle cx="994.10" cy="450.8" r="1.05" fill="#2b3335"/>
<circle cx="997.70" cy="450.8" r="1.05" fill="#2b3335"/>
<circle cx="1001.30" cy="450.8" r="1.05" fill="#2b3335"/>
<rect x="806.9" y="498.5" width="202.30000000000007" height="98.10000000000002" fill="#f3a696"/>
<line x1="808.4" y1="518.12" x2="1009.2" y2="518.12" stroke="#e89b8b" stroke-width="1" stroke-dasharray="1.6 3.76"/>
<line x1="808.4" y1="537.74" x2="1009.2" y2="537.74" stroke="#e89b8b" stroke-width="1" stroke-dasharray="1.6 3.76"/>
<line x1="808.4" y1="557.36" x2="1009.2" y2="557.36" stroke="#e89b8b" stroke-width="1" stroke-dasharray="1.6 3.76"/>
<line x1="808.4" y1="576.98" x2="1009.2" y2="576.98" stroke="#e89b8b" stroke-width="1" stroke-dasharray="1.6 3.76"/>
<line x1="771" y1="597.0" x2="1009.5" y2="597.0" stroke="#e3e6e7" stroke-width="1"/>
<polyline points="806.9,596.0 951.9,596.0 953.75,498.8 955.6,596.0 1009.2,596.0" fill="none" stroke="#4461c0" stroke-width="1.15" stroke-linejoin="miter"/>
<defs><clipPath id="c771_612"><rect x="771.3" y="600.8" width="237.9000000000001" height="16"/></clipPath></defs>
<text x="765.30" y="612.8" text-anchor="middle" clip-path="url(#c771_612)" font-size="9.4" fill="#5f6668" stroke="#5f6668" stroke-width="0.1">2:00am</text>
<text x="816.10" y="612.8" text-anchor="middle" clip-path="url(#c771_612)" font-size="9.4" fill="#5f6668" stroke="#5f6668" stroke-width="0.1">5:00am</text>
<text x="866.90" y="612.8" text-anchor="middle" clip-path="url(#c771_612)" font-size="9.4" fill="#5f6668" stroke="#5f6668" stroke-width="0.1">8:00am</text>
<text x="917.70" y="612.8" text-anchor="middle" clip-path="url(#c771_612)" font-size="9.4" fill="#5f6668" stroke="#5f6668" stroke-width="0.1">11:00am</text>
<text x="968.50" y="612.8" text-anchor="middle" clip-path="url(#c771_612)" font-size="9.4" fill="#5f6668" stroke="#5f6668" stroke-width="0.1">2:00pm</text>
<text x="1019.30" y="612.8" text-anchor="middle" clip-path="url(#c771_612)" font-size="9.4" fill="#5f6668" stroke="#5f6668" stroke-width="0.1">5:00pm</text>
<circle cx="778.6" cy="636.6" r="3.3" fill="#1f6fd8"/>
<path d="M814.6,633.2 L823.2,633.2 L823.2,640.0 L814.6,640.0 A3.4,3.4 0 0 1 814.6,633.2 Z" fill="#e9b73c"/>
<circle cx="823.0" cy="636.6" r="5.3" fill="#ffffff" stroke="#c4c8ca" stroke-width="0.9"/>
<path d="M779.0,649.6 L787.6,649.6 L787.6,656.4 L779.0,656.4 A3.4,3.4 0 0 1 779.0,649.6 Z" fill="#d8203f"/>
<circle cx="787.4" cy="653.0" r="5.3" fill="#ffffff" stroke="#c4c8ca" stroke-width="0.9"/>
</svg>
</body></html>
